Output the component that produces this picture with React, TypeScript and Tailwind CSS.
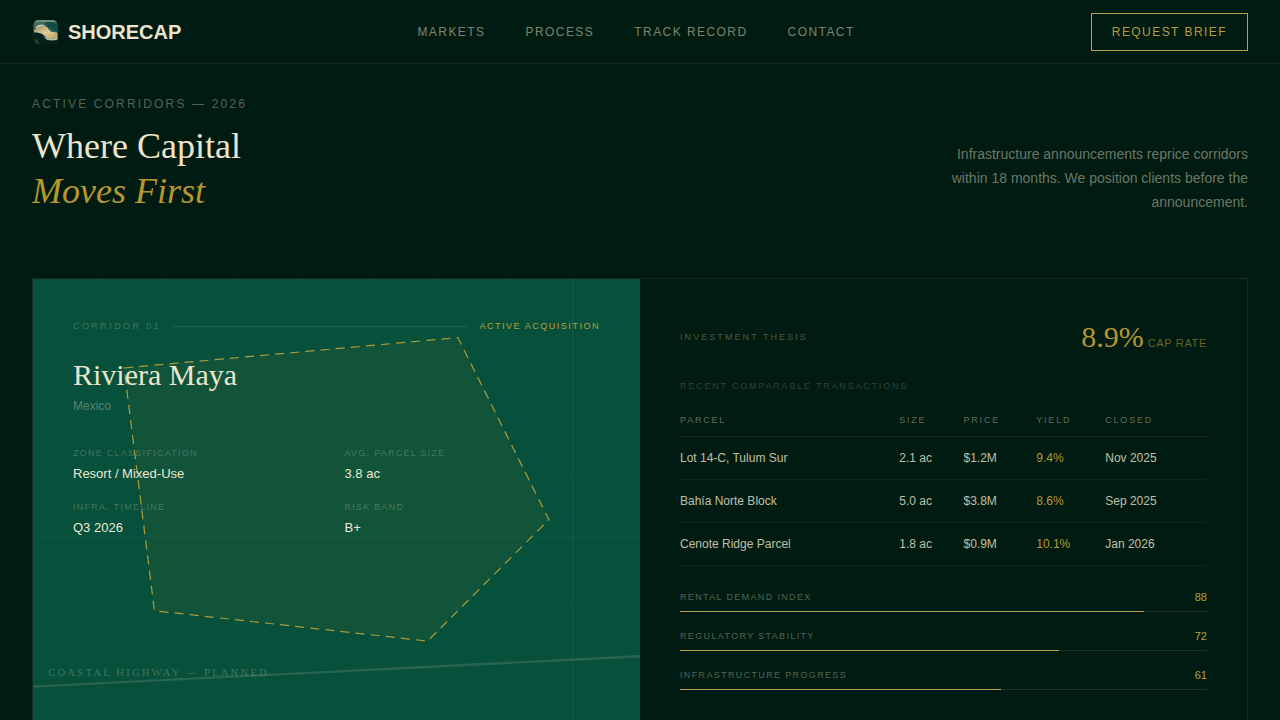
const navLinks = ['Markets', 'Process', 'Track Record', 'Contact'];

const facts = [
  { label: 'Zone Classification', value: 'Resort / Mixed-Use' },
  { label: 'Avg. Parcel Size', value: '3.8 ac' },
  { label: 'Infra. Timeline', value: 'Q3 2026' },
  { label: 'Risk Band', value: 'B+' },
];

const sales = [
  { parcel: 'Lot 14-C, Tulum Sur', size: '2.1 ac', price: '$1.2M', rate: '9.4%', closed: 'Nov 2025' },
  { parcel: 'Bahía Norte Block', size: '5.0 ac', price: '$3.8M', rate: '8.6%', closed: 'Sep 2025' },
  { parcel: 'Cenote Ridge Parcel', size: '1.8 ac', price: '$0.9M', rate: '10.1%', closed: 'Jan 2026' },
];

const scores = [
  { label: 'Rental Demand Index', value: 88 },
  { label: 'Regulatory Stability', value: 72 },
  { label: 'Infrastructure Progress', value: 61 },
];

function Logo() {
  return (
    <svg viewBox="0 0 28 28" className="size-7" aria-hidden="true">
      <defs>
        <clipPath id="logo-clip">
          <rect x="1.500" y="2" width="24" height="24" rx="5" />
        </clipPath>
        <linearGradient id="logo-sea" x1="0" y1="0" x2="1" y2="1">
          <stop offset="0" stopColor="#5d7a72" />
          <stop offset="0.4" stopColor="#2b5c53" />
          <stop offset="1" stopColor="#35665c" />
        </linearGradient>
        <linearGradient id="logo-sand" x1="0" y1="0" x2="1" y2="1">
          <stop offset="0" stopColor="#8f8a62" />
          <stop offset="0.5" stopColor="#e3cd98" />
          <stop offset="1" stopColor="#b9924e" />
        </linearGradient>
      </defs>
      <g clipPath="url(#logo-clip)">
        <rect width="28" height="28" fill="url(#logo-sea)" />
        <path d="M2 2h24v2H2z" fill="#6f8a84" />
        <path d="M13 5c5-2 9 0 13 2v7c-5-1-9-4-13-9z" fill="#124d45" />
        <path d="M4 9c3-3 7-3 9-1-3 0-6 1-9 3z" fill="#b9c6b2" />
        <path d="M2 12c3-2 7-5 11-4 3 1 4 5 7 6 2 0 4 0 6 1v4c-4 3-9 3-12 0-2-3-5-4-12-5z" fill="url(#logo-sand)" />
        <path d="M12 17c3 5 8 5 14 2v2c-4 3-9 3-12 0z" fill="#a9c0ac" />
        <path d="M1 15c5-1 9 0 11 4 1 3 5 4 14 3v4H1z" fill="#071f18" />
        <path d="M3 21c2 0 4 2 4 5H3z" fill="#1f4037" />
      </g>
    </svg>
  );
}

function SiteMap() {
  const columns = [1, 2, 3, 4, 5, 6, 7, 8];
  const rows = [1, 2, 3, 4, 5, 6];
  return (
    <svg
      viewBox="0 0 400 300"
      preserveAspectRatio="xMidYMid slice"
      className="absolute inset-0 size-full"
      role="img"
      aria-label="Parcel outline beside the planned coastal highway"
    >
      <g stroke="#a7d0b8" strokeWidth="0.5">
        {columns.map((n) => (
          <line key={n} x1={(n * 400) / 9} x2={(n * 400) / 9} y1="0" y2="300" opacity={n === 8 ? 0.12 : 0.03} />
        ))}
        {rows.map((n) => (
          <line key={n} y1={(n * 300) / 7} y2={(n * 300) / 7} x1="0" x2="400" opacity={n === 4 ? 0.07 : 0.02} />
        ))}
      </g>
      <polygon
        points="60,60 280,40 340,160 260,240 80,220"
        fill="#b8962e"
        fillOpacity="0.06"
        stroke="#c5a83c"
        strokeOpacity="0.85"
        strokeWidth="0.8"
        strokeDasharray="6 4"
      />
      <line x1="0" y1="270" x2="400" y2="250" stroke="#f0e8d0" strokeOpacity="0.14" strokeWidth="1.5" />
      <text x="10" y="263" className="fill-[#f0e8d0]/25 font-['Liberation_Serif',serif] text-[7px] tracking-[0.21em]">
        COASTAL HIGHWAY — PLANNED
      </text>
    </svg>
  );
}

function CorridorPanel() {
  return (
    <div className="relative overflow-hidden bg-[#07503b]">
      <SiteMap />
      <div className="relative p-10">
        <div className="flex items-center gap-3 text-[9px] leading-[14px] uppercase">
          <span className="tracking-[0.27em] text-[#f0e8d0]/25">Corridor 01</span>
          <span className="h-px flex-1 bg-[#f0e8d0]/12" />
          <span className="tracking-[0.17em] text-[#b8a038]">Active Acquisition</span>
        </div>
        <h2 className="mt-6 font-['Liberation_Serif',serif] text-3xl leading-9 text-[#ece4cc]">Riviera Maya</h2>
        <p className="mt-[5px] text-xs text-[#f0e8d0]/35">Mexico</p>
        <dl className="mt-8 grid grid-cols-2 gap-4">
          {facts.map((fact) => (
            <div key={fact.label}>
              <dt className="text-[9px] leading-[14px] tracking-[0.14em] text-[#f0e8d0]/25 uppercase">{fact.label}</dt>
              <dd className="mt-1 text-[13px] leading-5 text-[#ece8d4]">{fact.value}</dd>
            </div>
          ))}
        </dl>
      </div>
    </div>
  );
}

function ThesisPanel() {
  return (
    <div className="p-10">
      <div className="flex items-center justify-between">
        <h3 className="text-[9px] leading-[14px] tracking-[0.23em] text-[#f0e8d0]/30 uppercase">Investment Thesis</h3>
        <p className="flex items-baseline gap-1">
          <span className="font-['Liberation_Serif',serif] text-3xl leading-9 text-[#b8962e]">8.9%</span>
          <span className="text-[11px] tracking-[0.06em] text-[#b8962e]/60 uppercase">Cap Rate</span>
        </p>
      </div>
      <table className="mt-6 w-full table-fixed border-collapse text-left">
        <caption className="pb-3 text-left text-[9px] leading-[14px] tracking-[0.2em] text-[#f0e8d0]/20 uppercase">
          Recent Comparable Transactions
        </caption>
        <thead>
          <tr className="border-b border-[#f0e8d0]/8 text-[9px] leading-[15px] tracking-[0.2em] text-[#f0e8d0]/40 uppercase">
            <th scope="col" className="w-[41.6%] py-2 font-normal">Parcel</th>
            <th scope="col" className="w-[12.2%] py-2 font-normal">Size</th>
            <th scope="col" className="w-[13.8%] py-2 font-normal">Price</th>
            <th scope="col" className="w-[13.1%] py-2 font-normal">Yield</th>
            <th scope="col" className="py-2 font-normal">Closed</th>
          </tr>
        </thead>
        <tbody>
          {sales.map((sale) => (
            <tr key={sale.parcel} className="border-b border-[#f0e8d0]/5 text-xs leading-[18px] text-[#f0e8d0]/80">
              <td className="py-3">{sale.parcel}</td>
              <td className="py-3">{sale.size}</td>
              <td className="py-3">{sale.price}</td>
              <td className="py-3 text-[#b8962e]">{sale.rate}</td>
              <td className="py-3">{sale.closed}</td>
            </tr>
          ))}
        </tbody>
      </table>
      <ul className="mt-[23px] flex flex-col gap-4">
        {scores.map((score) => (
          <li key={score.label} className="flex flex-col gap-[6px]">
            <div className="flex items-center justify-between leading-4">
              <span className="text-[9px] tracking-[0.15em] text-[#f0e8d0]/35 uppercase">{score.label}</span>
              <span className="text-[11px] text-[#b8a038]">{score.value}</span>
            </div>
            <div className="h-px bg-[#f0e8d0]/10">
              <div className="h-full bg-[#b8a050]" style={{ width: `${score.value}%` }} />
            </div>
          </li>
        ))}
      </ul>
    </div>
  );
}

export default function App() {
  return (
    <div className="min-h-screen bg-[#001c12] font-['Liberation_Sans',sans-serif] text-[#ece4cc]">
      <header className="flex h-16 items-center justify-between border-b border-[#f0e8d0]/8 px-8">
        <a href="#" className="flex items-center gap-2 text-xl font-bold">
          <Logo />
          SHORECAP
        </a>
        <nav className="flex gap-10 text-xs tracking-[0.12em] text-[#f0e8d0]/50 uppercase">
          {navLinks.map((link) => (
            <a key={link} href="#">{link}</a>
          ))}
        </nav>
        <button type="button" className="border border-[#b8a050] px-5 py-[10px] text-xs tracking-[0.12em] text-[#b89c38] uppercase">
          Request Brief
        </button>
      </header>
      <main className="px-8 py-8">
        <section className="flex items-end justify-between">
          <div>
            <p className="text-xs tracking-[0.18em] text-[#f0e8d0]/35 uppercase">Active Corridors — 2026</p>
            <h1 className="mt-3 font-['Liberation_Serif',serif] text-4xl leading-[45px]">
              Where Capital
              <br />
              <em className="text-[#b8962e]">Moves First</em>
            </h1>
          </div>
          <p className="max-w-xs text-right text-sm leading-6 text-[#f0e8d0]/45">
            Infrastructure announcements reprice corridors within 18 months. We position clients before the announcement.
          </p>
        </section>
        <section className="mt-16 grid grid-cols-2 border border-[#f0e8d0]/8">
          <CorridorPanel />
          <ThesisPanel />
        </section>
      </main>
    </div>
  );
}
